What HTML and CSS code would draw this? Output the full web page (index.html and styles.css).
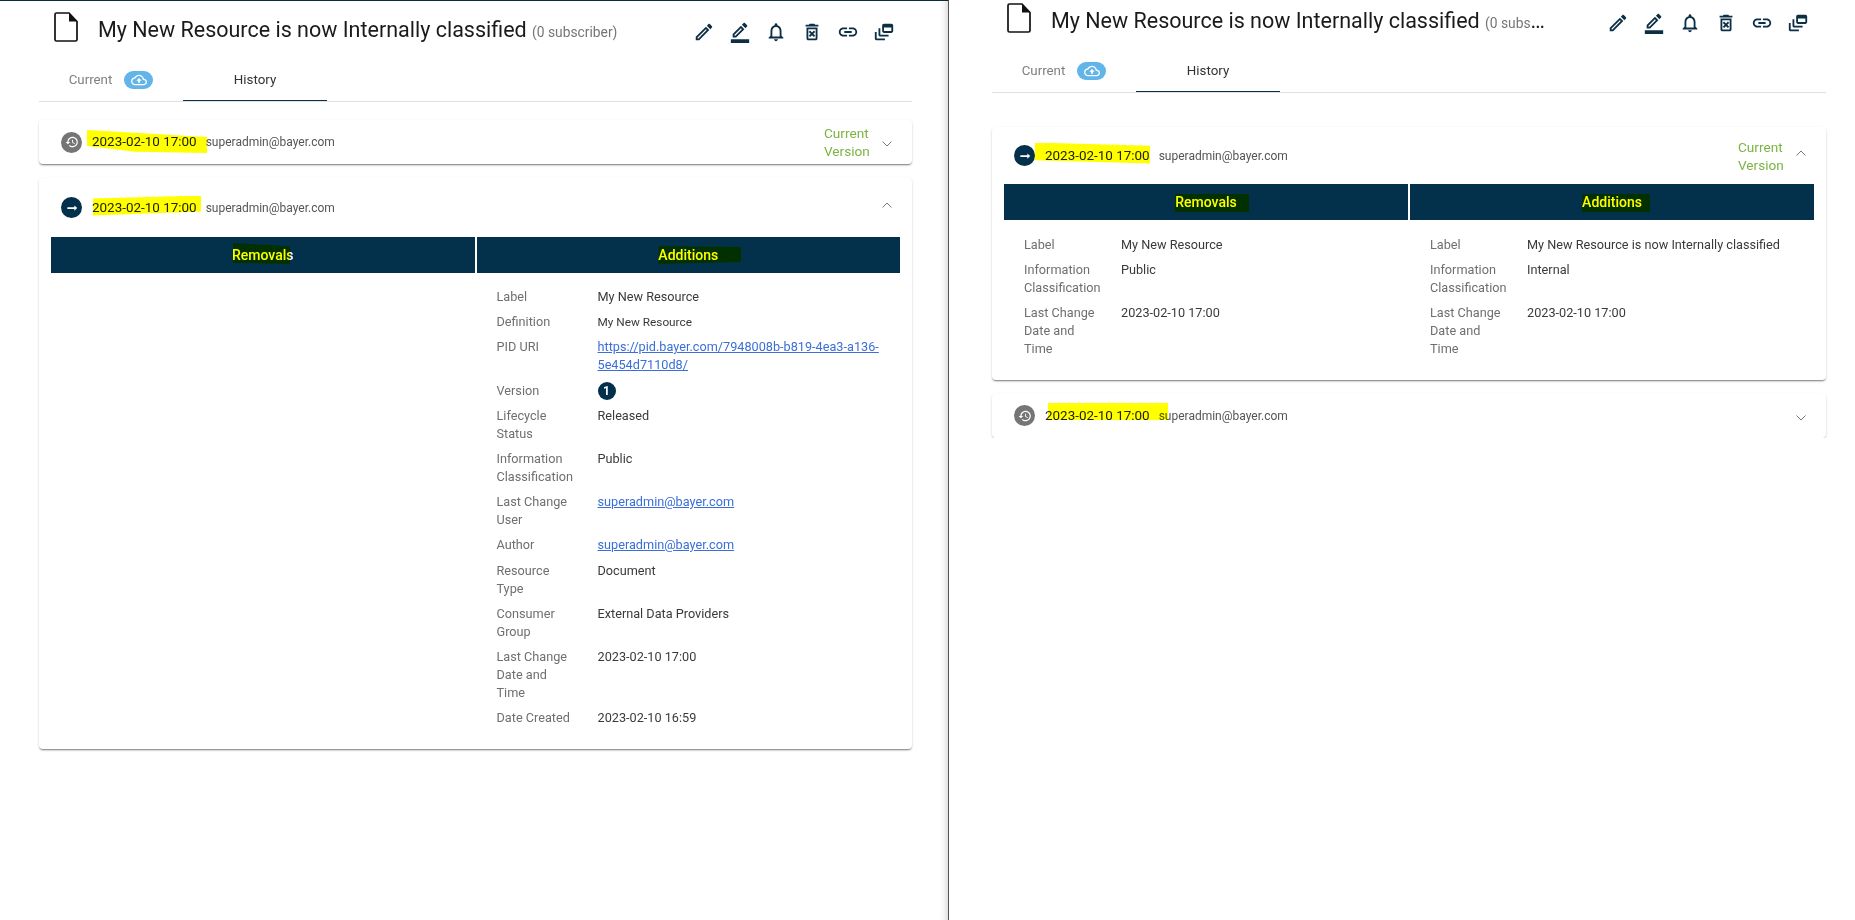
FILE: index.html
```html
<!DOCTYPE html>
<html lang="en">
<head>
  <meta charset="UTF-8" />
  <title>Resource History</title>
  <link rel="stylesheet" href="styles.css">
</head>
<body>
  <svg class="sprite" xmlns="http://www.w3.org/2000/svg">
    <symbol id="i-doc" viewBox="0 0 24 30"><path d="M2.5 1H15l8 8.5V27.5a1.5 1.5 0 0 1-1.500 1.500H2.500A1.500 1.500 0 0 1 1 27.500V2.500A1.500 1.500 0 0 1 2.500 1z" fill="none" stroke="currentColor" stroke-width="1.700"/><path d="M15 1l8 8.500h-8z" fill="currentColor"/></symbol>
    <symbol id="i-pencil" viewBox="0 0 24 24"><path d="M14.060 9.020l.92.92L5.920 19H5v-.92l9.060-9.060M17.660 3c-.25 0-.51.1-.7.29l-1.830 1.830 3.750 3.750 1.830-1.830c.39-.39.39-1.020 0-1.410l-2.340-2.340c-.2-.2-.45-.29-.71-.29zm-3.600 3.190L3 17.250V21h3.750L17.810 9.940l-3.750-3.750z"/></symbol>
    <symbol id="i-border" viewBox="0 0 24 24"><path d="M16.810 8.940l-3.750-3.750L4 14.250V18h3.750l9.060-9.060zM6 16v-.92l7.060-7.060.92.92L6.920 16H6zm13.710-9.960c.39-.39.39-1.020 0-1.410L17.370 2.290c-.19-.2-.45-.29-.71-.29-.25 0-.51.1-.7.29l-1.830 1.830 3.750 3.750 1.830-1.830zM2 20h20v4H2z"/></symbol>
    <symbol id="i-bell" viewBox="0 0 24 24"><path d="M12 22c1.100 0 2-.9 2-2h-4c0 1.100.9 2 2 2zm6-6v-5c0-3.070-1.630-5.640-4.500-6.320V4c0-.83-.67-1.500-1.500-1.500s-1.500.67-1.500 1.500v.68C7.640 5.360 6 7.920 6 11v5l-2 2v1h16v-1l-2-2zm-2 1H8v-6c0-2.480 1.510-4.500 4-4.500s4 2.020 4 4.500v6z"/></symbol>
    <symbol id="i-trash" viewBox="0 0 24 24"><path d="M14.120 10.470L12 12.590l-2.130-2.120-1.410 1.410L10.590 14l-2.120 2.120 1.410 1.410L12 15.410l2.120 2.120 1.410-1.410L13.410 14l2.120-2.120zM15.500 4l-1-1h-5l-1 1H5v2h14V4zM6 19c0 1.100.9 2 2 2h8c1.100 0 2-.9 2-2V7H6v12zM8 9h8v10H8V9z"/></symbol>
    <symbol id="i-link" viewBox="0 0 24 24"><path d="M3.900 12c0-1.710 1.390-3.100 3.100-3.100h4V7H7c-2.760 0-5 2.240-5 5s2.240 5 5 5h4v-1.900H7c-1.710 0-3.100-1.390-3.100-3.100zM8 13h8v-2H8v2zm9-6h-4v1.900h4c1.710 0 3.100 1.390 3.100 3.100s-1.390 3.100-3.100 3.100h-4V17h4c2.760 0 5-2.240 5-5s-2.240-5-5-5z"/></symbol>
    <symbol id="i-feed" viewBox="0 0 24 24"><path d="M8 8H6v7c0 1.100.9 2 2 2h9v-2H8V8zM20 3h-8c-1.100 0-2 .9-2 2v6c0 1.100.9 2 2 2h8c1.100 0 2-.9 2-2V5c0-1.100-.9-2-2-2zm0 8h-8V7h8v4zM4 12H2v7c0 1.100.9 2 2 2h9v-2H4v-7z"/></symbol>
    <symbol id="i-cloud" viewBox="0 0 24 24"><path d="M19.350 10.040C18.670 6.590 15.640 4 12 4 9.110 4 6.600 5.640 5.350 8.040 2.340 8.360 0 10.910 0 14c0 3.310 2.690 6 6 6h13c2.760 0 5-2.240 5-5 0-2.640-2.050-4.780-4.650-4.960zM19 18H6c-2.210 0-4-1.790-4-4 0-2.050 1.530-3.760 3.560-3.970l1.070-.11.5-.95C8.080 7.140 9.940 6 12 6c2.620 0 4.880 1.860 5.390 4.430l.3 1.500 1.530.11c1.560.1 2.780 1.410 2.780 2.960 0 1.650-1.350 3-3 3zM8 13h2.550v3h2.900v-3H16l-4-4z"/></symbol>
    <symbol id="i-history" viewBox="0 0 24 24"><path d="M13 3c-4.970 0-9 4.030-9 9H1l3.890 3.890.07.14L9 12H6c0-3.870 3.130-7 7-7s7 3.130 7 7-3.130 7-7 7c-1.930 0-3.680-.79-4.940-2.060l-1.420 1.420C8.270 19.990 10.510 21 13 21c4.970 0 9-4.030 9-9s-4.030-9-9-9zm-1 5v5l4.280 2.540.72-1.210-3.500-2.080V8H12z"/></symbol>
    <symbol id="i-arrow" viewBox="0 0 24 24"><path d="M16.010 10.500H4v3h12.010v3L21 12l-4.990-4.500z"/></symbol>
    <symbol id="i-down" viewBox="0 0 12 8"><path d="M1.500 1.500L6 6l4.500-4.500" fill="none" stroke="currentColor" stroke-width="1"/></symbol>
    <symbol id="i-up" viewBox="0 0 12 8"><path d="M1.500 6.500L6 2l4.500 4.500" fill="none" stroke="currentColor" stroke-width="1"/></symbol>
  </svg>

  <div class="screen">
    <!-- left window -->
    <section class="pane pane-left">
      <header class="title-row">
        <svg class="doc-icon"><use href="#i-doc"/></svg>
        <h1 class="title"><span class="title-text">My New Resource is now Internally classified</span> <small>(0 subscriber)</small></h1>
        <div class="actions">
          <svg><use href="#i-pencil"/></svg>
          <svg><use href="#i-border"/></svg>
          <svg><use href="#i-bell"/></svg>
          <svg><use href="#i-trash"/></svg>
          <svg><use href="#i-link"/></svg>
          <svg><use href="#i-feed"/></svg>
        </div>
      </header>

      <nav class="tabs">
        <div class="tab">Current <span class="cloud-badge"><svg><use href="#i-cloud"/></svg></span></div>
        <div class="tab tab-active">History</div>
      </nav>

      <div class="card card-closed">
        <div class="card-head">
          <span class="dot dot-gray"><svg><use href="#i-history"/></svg></span>
          <span class="date">2023-02-10 17:00<i class="mark mark-a"></i></span>
          <span class="user">superadmin@bayer.com</span>
          <span class="version">Current Version</span>
          <svg class="chevron"><use href="#i-down"/></svg>
        </div>
      </div>

      <div class="card">
        <div class="card-head">
          <span class="dot"><svg><use href="#i-arrow"/></svg></span>
          <span class="date">2023-02-10 17:00<i class="mark mark-b"></i></span>
          <span class="user">superadmin@bayer.com</span>
          <svg class="chevron"><use href="#i-up"/></svg>
        </div>
        <div class="diff">
          <div class="diff-head"><span class="marked">Removals<i class="mark mark-c"></i></span></div>
          <div class="diff-head"><span class="marked">Additions<i class="mark mark-d"></i></span></div>
          <div class="diff-col"></div>
          <dl class="diff-col">
            <div class="row"><dt>Label</dt><dd>My New Resource</dd></div>
            <div class="row"><dt>Definition</dt><dd class="small">My New Resource</dd></div>
            <div class="row"><dt>PID URI</dt><dd><a href="#">https://pid.bayer.com/7948008b-b819-4ea3-a136-5e454d7110d8/</a></dd></div>
            <div class="row"><dt>Version</dt><dd><span class="version-no">1</span></dd></div>
            <div class="row"><dt>Lifecycle Status</dt><dd>Released</dd></div>
            <div class="row"><dt>Information Classification</dt><dd>Public</dd></div>
            <div class="row"><dt>Last Change User</dt><dd><a href="#">superadmin@bayer.com</a></dd></div>
            <div class="row"><dt>Author</dt><dd><a href="#">superadmin@bayer.com</a></dd></div>
            <div class="row"><dt>Resource Type</dt><dd>Document</dd></div>
            <div class="row"><dt>Consumer Group</dt><dd>External Data Providers</dd></div>
            <div class="row"><dt>Last Change Date and Time</dt><dd>2023-02-10 17:00</dd></div>
            <div class="row"><dt>Date Created</dt><dd>2023-02-10 16:59</dd></div>
          </dl>
        </div>
      </div>
    </section>

    <!-- right window -->
    <section class="pane pane-right">
      <header class="title-row">
        <svg class="doc-icon"><use href="#i-doc"/></svg>
        <h1 class="title"><span class="title-text">My New Resource is now Internally classified</span> <small>(0 subscriber)</small></h1>
        <div class="actions">
          <svg><use href="#i-pencil"/></svg>
          <svg><use href="#i-border"/></svg>
          <svg><use href="#i-bell"/></svg>
          <svg><use href="#i-trash"/></svg>
          <svg><use href="#i-link"/></svg>
          <svg><use href="#i-feed"/></svg>
        </div>
      </header>

      <nav class="tabs">
        <div class="tab">Current <span class="cloud-badge"><svg><use href="#i-cloud"/></svg></span></div>
        <div class="tab tab-active">History</div>
      </nav>

      <div class="card">
        <div class="card-head">
          <span class="dot"><svg><use href="#i-arrow"/></svg></span>
          <span class="date">2023-02-10 17:00<i class="mark mark-e"></i></span>
          <span class="user">superadmin@bayer.com</span>
          <span class="version">Current Version</span>
          <svg class="chevron"><use href="#i-up"/></svg>
        </div>
        <div class="diff">
          <div class="diff-head"><span class="marked">Removals<i class="mark mark-f"></i></span></div>
          <div class="diff-head"><span class="marked">Additions<i class="mark mark-g"></i></span></div>
          <dl class="diff-col">
            <div class="row"><dt>Label</dt><dd>My New Resource</dd></div>
            <div class="row"><dt>Information Classification</dt><dd>Public</dd></div>
            <div class="row"><dt>Last Change Date and Time</dt><dd>2023-02-10 17:00</dd></div>
          </dl>
          <dl class="diff-col">
            <div class="row"><dt>Label</dt><dd>My New Resource is now Internally classified</dd></div>
            <div class="row"><dt>Information Classification</dt><dd>Internal</dd></div>
            <div class="row"><dt>Last Change Date and Time</dt><dd>2023-02-10 17:00</dd></div>
          </dl>
        </div>
      </div>

      <div class="card card-closed card-cut">
        <div class="card-head">
          <span class="dot dot-gray"><svg><use href="#i-history"/></svg></span>
          <span class="date">2023-02-10 17:00<i class="mark mark-h"></i></span>
          <span class="user">superadmin@bayer.com</span>
          <svg class="chevron"><use href="#i-down"/></svg>
        </div>
      </div>
    </section>
  </div>
</body>
</html>
```

FILE: styles.css
```css
* {
  box-sizing: border-box;
}
html, body {
  margin: 0;
  height: 100%;
  background: #fff;
}
body {
  font-family: Roboto, "Liberation Sans", sans-serif;
  font-size: 12.7px;
  line-height: 18px;
  color: #333;
  overflow: hidden;
}
.sprite {
  display: none;
}
.screen {
  display: flex;
  height: 920px;
}
.pane {
  overflow: hidden;
}
.pane-left {
  width: 949px;
  padding: 0 36px 0 39px;
  border-top: 1px solid #0d2b3e;
  border-right: 1px solid #555;
  box-shadow: inset -8px 0 8px -8px rgba(0, 0, 0, .25);
}
.pane-right {
  width: 906px;
  padding: 0 29px 0 43px;
}

/* title */
.title-row {
  display: flex;
  align-items: center;
  padding-left: 15px;
}
.pane-left .title-row {
  height: 57px;
}
.pane-right .title-row {
  height: 49px;
  padding-bottom: 9px;
}
.doc-icon {
  width: 24px;
  height: 30px;
  flex: none;
  color: #111;
  margin: -5px 20px 0 0;
}
.title {
  flex: 1;
  min-width: 0;
  margin: 2px 0 0;
  font-size: 21.5px;
  font-weight: 400;
  line-height: 30px;
  color: #1a1a1a;
  white-space: nowrap;
  overflow: hidden;
  text-overflow: ellipsis;
}
.pane-right .title {
  flex: none;
  width: 494px;
  margin: 4px auto 0 0;
}
.title small {
  font-size: 13.8px;
  color: #757575;
}
.actions {
  display: flex;
  flex: none;
  color: #0d2f46;
  margin: 5px 10px 0 16px;
}
.actions svg {
  width: 22px;
  height: 22px;
  margin: 0 7px;
  fill: currentColor;
}

/* tabs */
.tabs {
  display: flex;
  height: 44px;
  border-bottom: 1px solid #e0e0e0;
}
.tab {
  display: flex;
  align-items: center;
  justify-content: center;
  gap: 12px;
  width: 144px;
  height: 43px;
  padding-top: 1px;
  border-bottom: 1px solid transparent;
  color: #808080;
  font-size: 13.33px;
}
.pane-right .tab {
  padding-top: 2px;
}
.tab-active {
  color: #333;
  border-bottom-color: #0d2f46;
}
.cloud-badge {
  display: flex;
  align-items: center;
  justify-content: center;
  width: 29px;
  height: 18px;
  border-radius: 9px;
  background: #62b5e8;
}
.cloud-badge svg {
  width: 16px;
  height: 16px;
  fill: #fff;
}

/* cards */
.card {
  background: #fff;
  border-radius: 4px;
  box-shadow: 0 2px 2px -1px rgba(0, 0, 0, .35), 0 1px 1px 0 rgba(0, 0, 0, .14), 0 1px 3px 0 rgba(0, 0, 0, .12);
  margin-bottom: 14px;
}
.pane-left .tabs {
  margin-bottom: 18px;
}
.pane-right .tabs {
  margin-bottom: 34px;
}
.card-cut {
  clip-path: inset(-5px -5px 0 -5px);
}
.card-head {
  display: flex;
  align-items: center;
  height: 59px;
  padding: 0 19px 0 22px;
}
.pane-right .card-head {
  height: 57px;
}
.card-closed .card-head,
.pane-right .card-closed .card-head {
  height: 44px;
}
.dot {
  display: flex;
  align-items: center;
  justify-content: center;
  flex: none;
  width: 21px;
  height: 21px;
  margin-right: 10px;
  border-radius: 50%;
  background: #03304b;
}
.dot-gray {
  background: #757575;
}
.dot svg {
  width: 14px;
  height: 14px;
  fill: #fff;
}
.date {
  position: relative;
  color: #222;
  font-size: 13.45px;
}
.user {
  margin-left: 9px;
  color: #555;
  font-size: 12px;
}
.version {
  width: 48px;
  margin-left: auto;
  color: #7cb342;
  font-size: 13.6px;
}
.chevron {
  width: 12px;
  height: 8px;
  margin: -6px 0 0 9px;
  color: #777;
}
.card-closed .chevron {
  margin-top: 4px;
}
.card-head .user + .chevron {
  margin-left: auto;
}

/* diff */
.diff {
  display: grid;
  grid-template-columns: 1fr 1fr;
  column-gap: 2px;
  padding: 0 12px;
}
.diff-head {
  height: 36px;
  background: #03304b;
  color: #fff;
  font-size: 14px;
  font-weight: 500;
  line-height: 36px;
  text-align: center;
}
.diff-col {
  min-width: 0;
  margin: 0;
  padding: 15px 10px 15px 20px;
}
.pane-right .diff-col {
  padding: 16px 10px 14px 20px;
}
.row {
  display: grid;
  grid-template-columns: 81px 1fr;
  column-gap: 20px;
  margin-bottom: 7.2px;
}
.pane-right .row {
  column-gap: 16px;
}
dt {
  color: #6f6f6f;
}
dd {
  margin: 0;
  color: #3a3a3a;
}
dd.small {
  font-size: 11.8px;
}
dd a {
  color: #3b6fd8;
}
.version-no {
  display: block;
  width: 18px;
  height: 18px;
  border-radius: 50%;
  background: #03304b;
  color: #fff;
  font-size: 12px;
  font-weight: 700;
  text-align: center;
}

/* marker pen strokes over the text */
.marked {
  position: relative;
  display: inline-block;
  line-height: 18px;
}
.mark {
  position: absolute;
  background: #ffff00;
  mix-blend-mode: multiply;
}
.mark-a {
  left: -5px;
  top: -3px;
  width: 120px;
  height: 23px;
  clip-path: polygon(0 0, 100% 30%, 100% 100%, 40% 95%, 0 70%);
}
.mark-b {
  left: 1px;
  top: -3px;
  width: 108px;
  height: 20px;
  clip-path: polygon(0 15%, 100% 0, 100% 80%, 0 100%);
}
.mark-c {
  left: 1px;
  top: -3px;
  width: 57px;
  height: 21px;
  clip-path: polygon(0 0, 100% 15%, 100% 100%, 0 95%);
}
.mark-d {
  left: 0;
  top: -1px;
  width: 83px;
  height: 19px;
  clip-path: polygon(0 5%, 100% 10%, 100% 90%, 0 100%);
}
.mark-e {
  left: -10px;
  top: -4px;
  width: 115px;
  height: 21px;
  clip-path: polygon(0 0, 100% 15%, 100% 100%, 0 85%);
}
.mark-f {
  left: 0;
  top: 1px;
  width: 74px;
  height: 18px;
}
.mark-g {
  left: 0;
  top: 1px;
  width: 68px;
  height: 18px;
}
.mark-h {
  left: 3px;
  top: -4px;
  width: 120px;
  height: 17px;
}
```
